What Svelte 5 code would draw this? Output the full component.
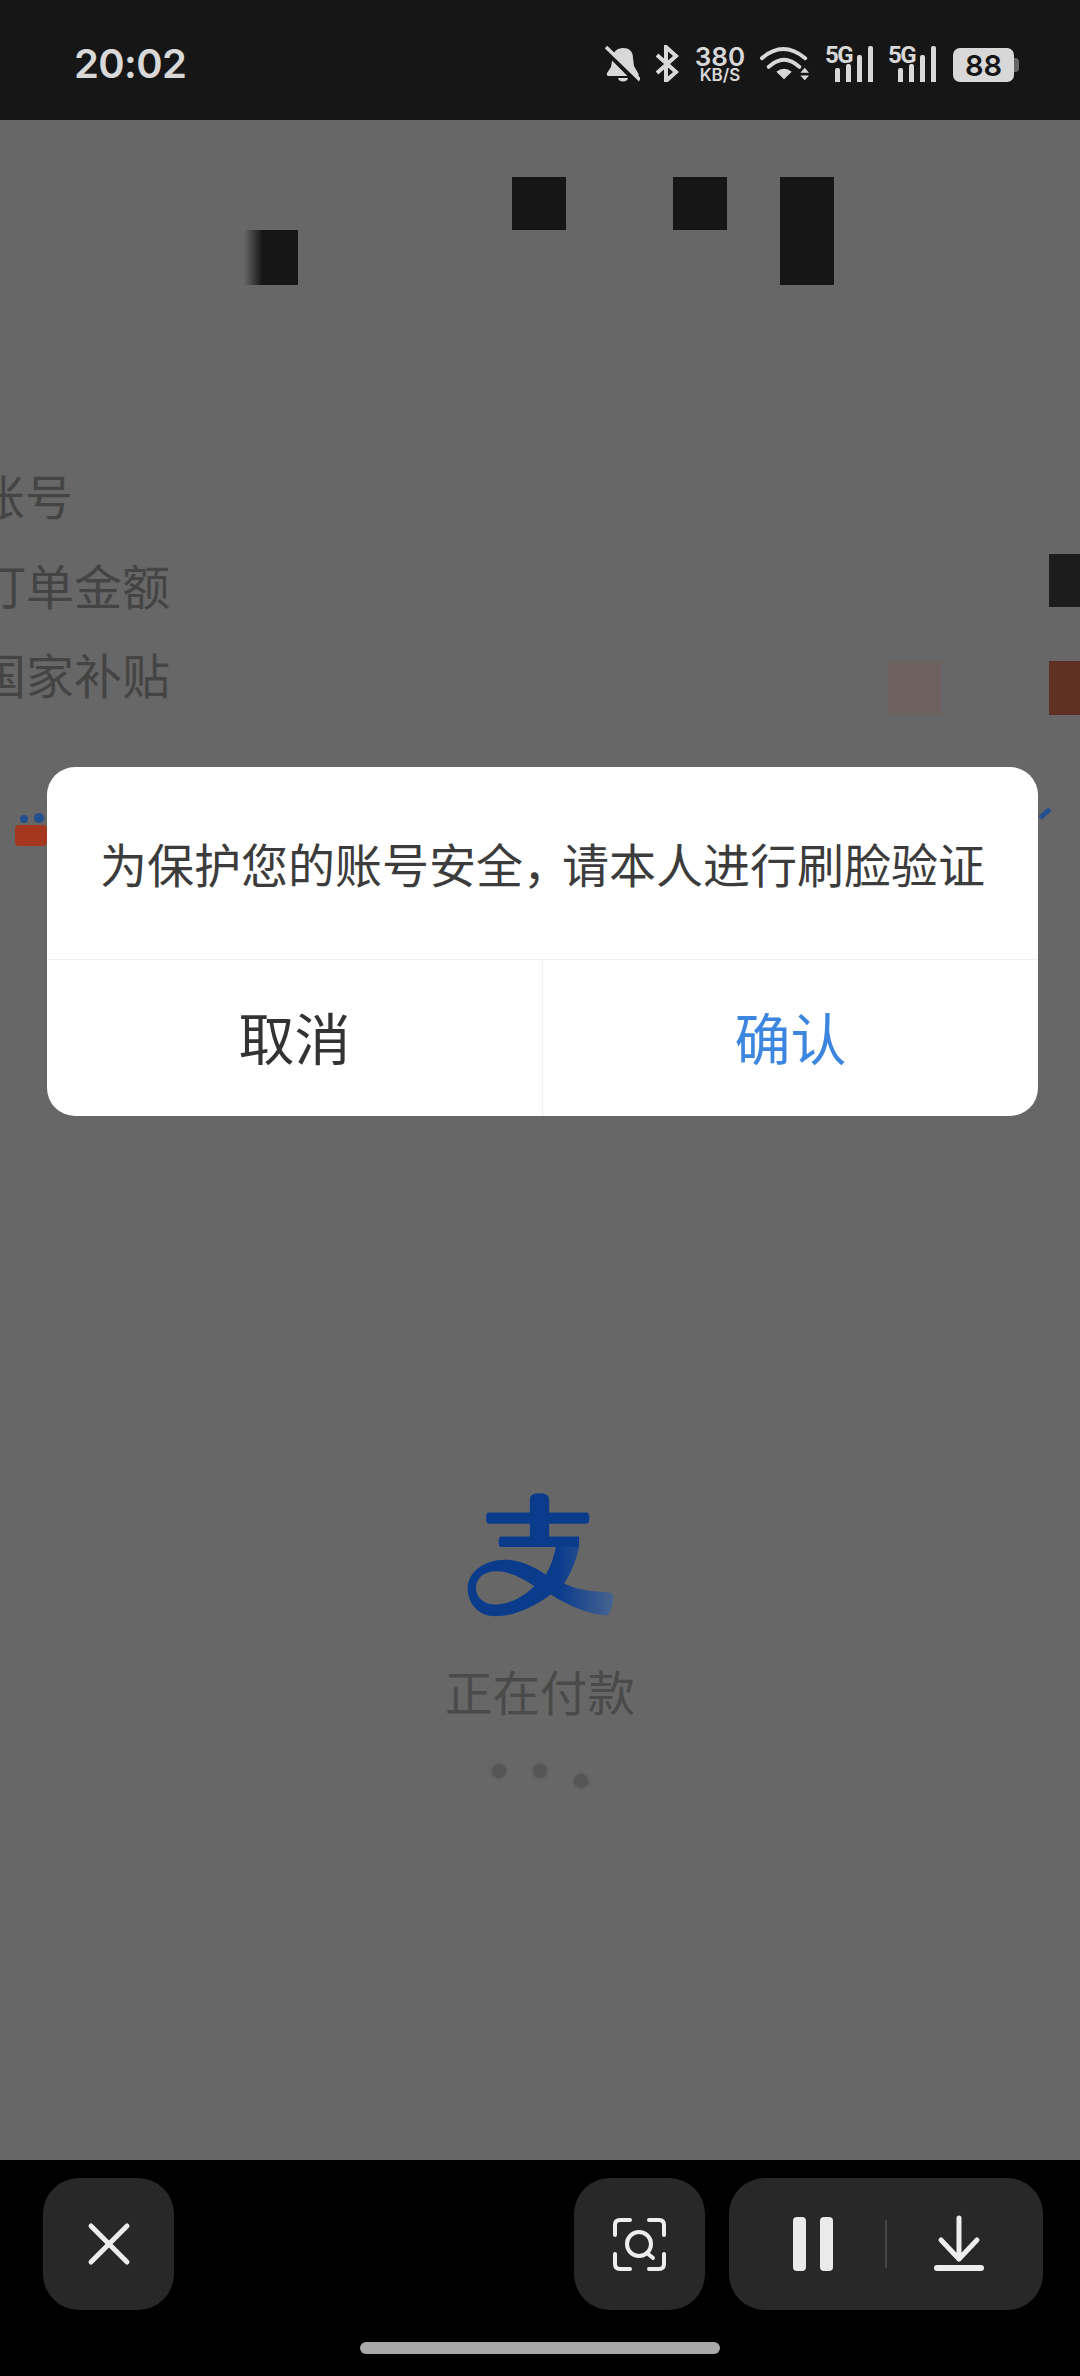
<script>
    const blocks = [
        {x: 244, y: 110, w: 54, h: 55, c: "linear-gradient(90deg, #676767, #161616 34%)"},
        {x: 512, y: 57, w: 54, h: 53, c: "#161616"},
        {x: 673, y: 57, w: 54, h: 53, c: "#161616"},
        {x: 780, y: 57, w: 54, h: 108, c: "#161616"},
        {x: 1049, y: 434, w: 31, h: 53, c: "#1c1c1c"},
        {x: 888, y: 541, w: 54, h: 54, c: "#6d625f"},
        {x: 1049, y: 541, w: 31, h: 54, c: "#5f3024"}
    ];
    const rows = ["账号", "订单金额", "国家补贴"];
    const signalBars = [14, 18, 27, 36];
</script>

<div class="screen">
    <header class="status">
        <span class="time">20:02</span>
        <div class="icons">
            <svg width="35" height="37" viewBox="0 0 35 37">
                <path class="fill" d="M18 3C12 3 8 7 7.500 13L6 22 2 28Q1 31 4 31H32Q35 31 33 28L29 21 28 13C28 6 24 3 18 3Z" />
                <path class="fill" d="M13 33h10a5 3.500 0 0 1-10 0Z" />
                <path d="M-1 4 31 36" stroke="#161616" stroke-width="5" />
                <path d="M1 2 35 35" stroke="#d8d8d8" stroke-width="3.500" />
            </svg>
            <svg width="25" height="37" viewBox="0 0 25 37">
                <path d="M2 10 21 27 11 36V2L21 11 2 28" fill="none" stroke="#d8d8d8" stroke-width="4" />
            </svg>
            <div class="speed">
                <span class="rate">380</span>
                <span class="unit">KB/S</span>
            </div>
            <svg width="50" height="37" viewBox="0 0 52 37">
                <path d="M2 13Q24-6 47 13" fill="none" stroke="#d8d8d8" stroke-width="4" stroke-linecap="round" />
                <path d="M9 22Q25 7 41 22" fill="none" stroke="#d8d8d8" stroke-width="4" stroke-linecap="round" />
                <path class="fill" d="M17 27Q25 21 33 27L25 35Z" />
                <path class="fill" d="M46.500 23 51 28H42Z" />
                <path class="fill" d="M42 31H51L46.500 36Z" />
            </svg>
            {#each [0, 1] as sim}
                <div class="signal" data-sim={sim}>
                    <span class="tag">5G</span>
                    <div class="bars">
                        {#each signalBars as h}
                            <i style="height: {h}px"></i>
                        {/each}
                    </div>
                </div>
            {/each}
            <div class="battery">
                <span class="level">88</span>
                <i class="nub"></i>
            </div>
        </div>
    </header>

    <main class="page">
        {#each blocks as b}
            <i class="block" style="left: {b.x}px; top: {b.y}px; width: {b.w}px; height: {b.h}px; background: {b.c}"></i>
        {/each}

        <div class="rows">
            {#each rows as row}
                <div class="row">{row}</div>
            {/each}
        </div>

        <div class="paying">
            <svg width="148" height="125" viewBox="200 100 445 375">
                <defs>
                    <linearGradient id="tail" gradientUnits="userSpaceOnUse" x1="480" y1="0" x2="645" y2="0">
                        <stop offset="0" stop-color="#0b3c8c" />
                        <stop offset="1" stop-color="#47648f" />
                    </linearGradient>
                </defs>
                <path fill="#0b3c8c" d="M392 118Q392 100 420 100 450 100 450 118V158H562Q571 158 571 175 571 192 562 192H450V230H540V262H392V230H306Q298 230 298 246 298 262 306 262H392V192H268Q260 192 260 175 260 158 268 158H392Z" />
                <path fill="url(#tail)" fill-rule="evenodd" d="M470 262H540C530 310 510 350 495 372 540 395 590 395 640 400 645 430 640 450 625 468 570 465 510 440 455 405 400 445 345 470 290 470 235 470 205 430 205 385 205 335 260 298 320 300 370 302 410 325 440 345 455 320 465 290 470 262ZM405 380C370 355 330 335 290 335 255 335 230 355 230 385 230 415 255 435 290 435 325 435 370 415 405 380Z" />
            </svg>
            <p class="paying-text">正在付款</p>
            <div class="dots">
                <i></i>
                <i></i>
                <i class="low"></i>
            </div>
        </div>

        <svg class="peek peek-left" width="32" height="36" viewBox="0 0 32 36">
            <circle cx="9" cy="6" r="4" fill="#23508f" />
            <circle cx="24" cy="5" r="5" fill="#23508f" />
            <rect x="0" y="12" width="32" height="21" rx="4" fill="#a5371f" />
        </svg>
        <svg class="peek peek-right" width="14" height="14" viewBox="0 0 14 14">
            <path d="M2 12 12 3" stroke="#23508f" stroke-width="5" />
        </svg>

        <div class="dialog">
            <p class="message">为保护您的账号安全<span class="comma">，</span>请本人进行刷脸验证</p>
            <div class="actions">
                <div class="action">取消</div>
                <div class="action confirm">确认</div>
            </div>
        </div>
    </main>

    <footer class="toolbar">
        <div class="controls">
            <div class="btn">
                <svg width="46" height="46" viewBox="0 0 46 46">
                    <path d="M5 5 41 41M41 5 5 41" stroke="#eee" stroke-width="5" stroke-linecap="round" />
                </svg>
            </div>
            <div class="spacer"></div>
            <div class="btn">
                <svg width="55" height="55" viewBox="0 0 55 55">
                    <path d="M18 3H8Q3 3 3 8V18M37 3H47Q52 3 52 8V18M3 37V47Q3 52 8 52H18M52 37V47Q52 52 47 52H37" fill="none" stroke="#eee" stroke-width="4" stroke-linecap="round" />
                    <circle cx="27" cy="27" r="12" fill="none" stroke="#eee" stroke-width="4" />
                    <path d="M35 36 41 41" stroke="#eee" stroke-width="4" stroke-linecap="round" />
                </svg>
            </div>
            <div class="btn wide">
                <div class="pause">
                    <i></i>
                    <i></i>
                </div>
                <i class="sep"></i>
                <svg width="50" height="58" viewBox="0 0 50 58">
                    <path d="M25 3V44M7 25 25 44 43 25" fill="none" stroke="#eee" stroke-width="5" stroke-linecap="round" stroke-linejoin="round" />
                    <path d="M3 53H47" stroke="#eee" stroke-width="6" stroke-linecap="round" />
                </svg>
            </div>
        </div>
        <div class="home"></div>
    </footer>
</div>

<style>
    :global(body) {
        background: #000;
    }

    .screen {
        width: 1080px;
        height: 2376px;
        display: flex;
        flex-direction: column;
        overflow: hidden;
        font-family: Inter, "Noto Sans CJK SC", sans-serif;
    }

    .status {
        height: 120px;
        flex: none;
        box-sizing: border-box;
        padding: 45px 61px 0 74px;
        display: flex;
        justify-content: space-between;
        align-items: flex-start;
        background: #161616;
        color: #d8d8d8;
    }

    .time {
        font-size: 40px;
        line-height: 37px;
        font-weight: 600;
        letter-spacing: -0.6px;
    }

    .icons {
        display: flex;
        gap: 15px;
        height: 37px;
    }

    .fill {
        fill: #d8d8d8;
    }

    .speed {
        width: 50px;
        display: flex;
        flex-direction: column;
        align-items: center;
        font-weight: 600;
    }

    .rate {
        font-size: 26px;
        line-height: 23px;
    }

    .unit {
        font-size: 17px;
        line-height: 14px;
    }

    .signal {
        width: 48px;
        position: relative;
    }

    .tag {
        position: absolute;
        left: 0;
        top: -4px;
        font-family: Roboto, sans-serif;
        font-size: 24px;
        line-height: 28px;
        font-weight: 700;
        letter-spacing: -1.5px;
    }

    .bars {
        height: 37px;
        display: flex;
        align-items: flex-end;
        justify-content: flex-end;
        gap: 6px;
    }

    .bars i {
        width: 5px;
        border-radius: 2px 2px 0 0;
        background: #d8d8d8;
    }

    .battery {
        width: 61px;
        height: 34px;
        margin: 3px 5px 0 2px;
        position: relative;
        display: flex;
        align-items: center;
        justify-content: center;
        border-radius: 7px;
        background: #d8d8d8;
        color: #161616;
        font-size: 29px;
        font-weight: 600;
    }

    .nub {
        position: absolute;
        left: 61px;
        top: 10px;
        width: 5px;
        height: 14px;
        border-radius: 0 4px 4px 0;
        background: #666;
    }

    .page {
        flex: 1;
        position: relative;
        padding-top: 329px;
        background: #676767;
        color: #444;
        font-family: "Noto Sans CJK SC", sans-serif;
    }

    .block {
        position: absolute;
    }

    .rows {
        margin-left: -22px;
        font-size: 48px;
        line-height: 90px;
    }

    .row {
        height: 89.5px;
        white-space: nowrap;
    }

    .row:first-child {
        margin-left: -1px;
    }

    .paying {
        margin-top: 775px;
        display: flex;
        flex-direction: column;
        align-items: center;
    }

    .paying-text {
        margin: 43px 0 0;
        font-size: 47.5px;
        line-height: 60px;
        color: #4a4a4a;
    }

    .dots {
        margin-top: 43px;
        display: flex;
        gap: 27px;
    }

    .dots i {
        width: 14px;
        height: 14px;
        border-radius: 50%;
        background: #565656;
        box-shadow: 0 0 3px #565656;
    }

    .dots .low {
        margin-top: 10px;
    }

    .peek {
        position: absolute;
    }

    .peek-left {
        left: 15px;
        top: 693px;
    }

    .peek-right {
        left: 1038px;
        top: 686px;
    }

    .dialog {
        position: absolute;
        left: 47px;
        top: 647px;
        width: 991px;
        height: 349px;
        display: flex;
        flex-direction: column;
        border-radius: 28px;
        background: #fff;
    }

    .message {
        margin: 0;
        height: 193px;
        flex: none;
        box-sizing: border-box;
        border-bottom: 1px solid #f0f0f0;
        font-size: 47px;
        line-height: 192px;
        text-align: center;
        white-space: nowrap;
        color: #3c3c3c;
    }

    .comma {
        letter-spacing: -8px;
    }

    .actions {
        flex: 1;
        display: flex;
        padding-bottom: 5px;
    }

    .action {
        flex: 1;
        display: flex;
        align-items: center;
        justify-content: center;
        font-size: 56px;
        color: #333;
    }

    .confirm {
        border-left: 1px solid #f0f0f0;
        margin-bottom: -5px;
        padding-bottom: 5px;
        color: #3c86e0;
    }

    .toolbar {
        height: 216px;
        flex: none;
        box-sizing: border-box;
        padding: 18px 37px 0 43px;
        background: #000;
    }

    .controls {
        display: flex;
        gap: 24px;
    }

    .spacer {
        flex: 1;
    }

    .btn {
        width: 131px;
        height: 132px;
        display: flex;
        align-items: center;
        justify-content: center;
        border-radius: 36px;
        background: #282828;
    }

    .wide {
        width: 314px;
        justify-content: flex-start;
        box-sizing: border-box;
        padding-left: 64px;
    }

    .pause {
        display: flex;
        gap: 14px;
    }

    .pause i {
        width: 13px;
        height: 54px;
        border-radius: 4px;
        background: #eaeaea;
    }

    .sep {
        width: 2px;
        height: 48px;
        margin: 0 47px 0 52px;
        background: #484848;
    }

    .home {
        width: 360px;
        height: 12px;
        margin: 32px 0 0 317px;
        border-radius: 6px;
        background: #a9a9a9;
    }
</style>
